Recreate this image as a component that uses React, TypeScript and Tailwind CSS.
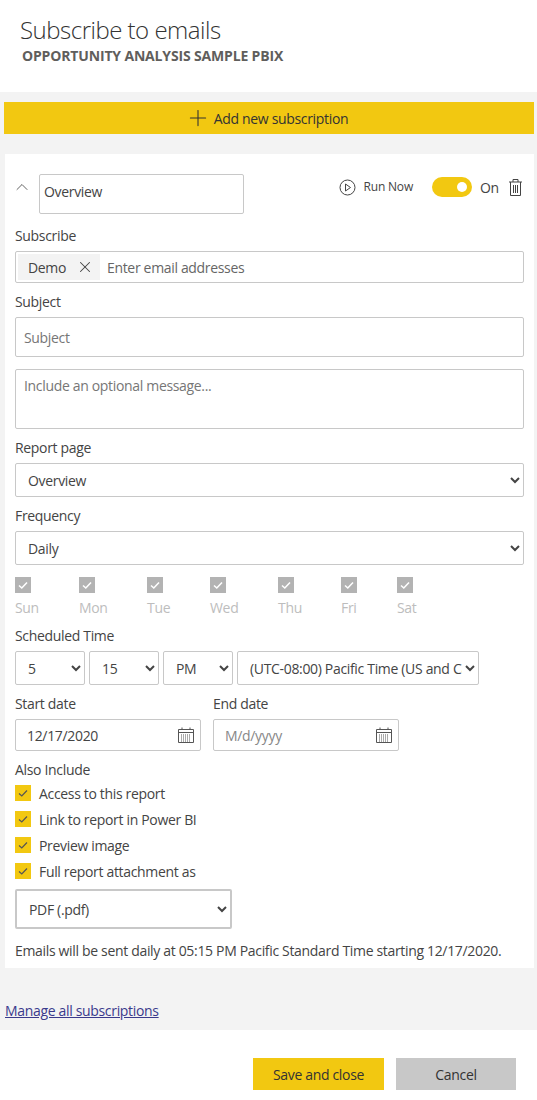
import React, { FC } from "react";
import { ChevronUp, Plus, X } from "lucide-react";

const fieldBorder = "border border-[#c8c8c8] rounded-[2px] bg-white";
const selectBase = `${fieldBorder} text-[14px] text-[#444] outline-none`;

const days = [
  { label: "Sun", width: "w-[64px]" },
  { label: "Mon", width: "w-[68px]" },
  { label: "Tue", width: "w-[63px]" },
  { label: "Wed", width: "w-[68px]" },
  { label: "Thu", width: "w-[63px]" },
  { label: "Fri", width: "w-[56px]" },
  { label: "Sat", width: "w-[50px]" },
];

const extras = ["Access to this report", "Link to report in Power BI", "Preview image", "Full report attachment as"];

const Check: FC<{ color: string; stroke: string; width: string }> = ({ color, stroke, width }) => (
  <span className={`flex h-4 w-4 shrink-0 items-center justify-center ${color}`}>
    <svg width="12" height="12" viewBox="0 0 12 12" fill="none" stroke={stroke} strokeWidth={width}>
      <path d="M2 6.5 L4.8 9 L10 3.5" />
    </svg>
  </span>
);

const Label: FC<{ children: React.ReactNode; className?: string }> = ({ children, className }) => (
  <div className={`h-5 text-[14px] leading-5 text-[#444] ${className ?? ""}`}>{children}</div>
);

const CalendarIcon = () => (
  <svg width="16" height="16" viewBox="0 0 16 16" fill="none" stroke="#555" strokeWidth="1">
    <path d="M0.5 2.5 H15.5 V15.5 H0.5 Z M0.5 5.5 H15.5 M4 0.5 V3 M12 0.5 V3" />
    <path d="M3 8 H13 M3 10 H13 M3 12 H13 M3 14 H13" strokeDasharray="1 1" />
  </svg>
);

const App: FC = () => {
  return (
    <div className="flex h-[1100px] w-[537px] flex-col bg-white font-['Open_Sans',sans-serif] text-[14px] tracking-[-0.33px] text-[#333]">
      <div className="h-[92px] shrink-0 pl-5 pt-[13px]">
        <h1 className="h-[33px] text-[24px] font-light leading-[33px] tracking-[-0.5px] text-[#333]">Subscribe to emails</h1>
        <h2 className="pl-0.5 text-[14px] font-bold leading-[19px] tracking-[-0.16px] text-[#605e5c]">
          OPPORTUNITY ANALYSIS SAMPLE PBIX
        </h2>
      </div>

      <div className="flex h-[938px] shrink-0 flex-col bg-[#f3f3f3] pl-1 pr-[3px] pt-2.5">
        <button className="flex h-8 w-full items-center justify-center gap-[3px] bg-[#f2c811] pr-[5px] text-[14px] text-[#333]">
          <Plus size={26} strokeWidth={1} />
          Add new subscription
        </button>

        <div className="ml-px mt-5 flex h-[814px] flex-col bg-white pl-2.5 pr-[10px] pt-5">
          <div className="flex h-10 items-start justify-between">
            <div className="flex items-start">
              <ChevronUp size={20} strokeWidth={1} className="-ml-[3px] mr-[7px] mt-[3px] text-[#444]" />
              <input
                defaultValue="Overview"
                className="h-10 w-[205px] rounded-[2px] border border-[#c8c8c8] pb-1.5 pl-1 text-[14px] text-[#444] outline-none"
              />
            </div>
            <div className="flex h-[26px] items-center text-[#444]">
              <svg width="17" height="17" viewBox="0 0 17 17" fill="none" stroke="#444" strokeWidth="1">
                <circle cx="8.5" cy="8.5" r="7.5" />
                <path d="M6.5 5 L11.5 8.5 L6.5 12 Z" />
              </svg>
              <span className="ml-2 text-[12px] tracking-[-0.2px]">Run Now</span>
              <span className="ml-[19px] flex h-5 w-10 items-center justify-end rounded-full bg-[#f2c811] pr-[5px]">
                <span className="h-2.5 w-2.5 rounded-full bg-white" />
              </span>
              <span className="ml-2 w-[29px] text-[14px]">On</span>
              <svg width="13" height="17" viewBox="0 0 13 17" fill="none" stroke="#444" strokeWidth="1" className="mr-0.5">
                <path d="M0 3 H13 M4 3 V0.5 H9 V3 M1.5 3 V16.5 H11.5 V3 M4.5 6 V14 M6.5 6 V14 M8.5 6 V14" />
              </svg>
            </div>
          </div>

          <Label className="mt-[12px]">Subscribe</Label>
          <div className={`mt-[5px] flex h-8 items-center ${fieldBorder} pl-0.5`}>
            <span className="flex h-[26px] w-[82px] items-center justify-between bg-[#f3f3f3] pl-2.5 pr-1.5 text-[#444]">
              Demo
              <X size={18} strokeWidth={1.4} />
            </span>
            <input placeholder="Enter email addresses" className="ml-[7px] flex-1 text-[14px] outline-none placeholder:text-[#666]" />
          </div>

          <Label className="mt-[9px]">Subject</Label>
          <input placeholder="Subject" className={`mt-[5px] h-10 ${fieldBorder} pl-2 text-[14px] outline-none placeholder:text-[#767676]`} />

          <textarea
            placeholder="Include an optional message..."
            className={`mt-3 h-[60px] resize-none ${fieldBorder} px-2 pt-1.5 text-[14px] leading-5 outline-none placeholder:text-[#767676]`}
          />

          <Label className="mt-[9px]">Report page</Label>
          <select defaultValue="Overview" className={`mt-[5px] h-[34px] ${selectBase} pl-2`}>
            <option>Overview</option>
          </select>

          <Label className="mt-[9px]">Frequency</Label>
          <select defaultValue="Daily" className={`mt-[5px] h-[34px] ${selectBase} pl-2`}>
            <option>Daily</option>
          </select>

          <div className="mt-3 flex">
            {days.map((day) => (
              <div key={day.label} className={`flex flex-col ${day.width}`}>
                <Check color="bg-[#b3b3b3]" stroke="#fff" width="1.6" />
                <span className="mt-[5px] h-5 text-[14px] leading-5 text-[#bdbdbd]">{day.label}</span>
              </div>
            ))}
          </div>

          <Label className="mt-[8px]">Scheduled Time</Label>
          <div className="mt-[5px] flex gap-1">
            <select defaultValue="5" className={`h-[34px] w-[70px] ${selectBase} pl-2`}>
              <option>5</option>
            </select>
            <select defaultValue="15" className={`h-[34px] w-[70px] ${selectBase} pl-2`}>
              <option>15</option>
            </select>
            <select defaultValue="PM" className={`h-[34px] w-[70px] ${selectBase} pl-2`}>
              <option>PM</option>
            </select>
            <select className={`h-[34px] w-[242px] ${selectBase} pl-2`}>
              <option>(UTC-08:00) Pacific Time (US and Canada)</option>
            </select>
          </div>

          <div className="mt-[9px] flex gap-3">
            <div className="w-[186px]">
              <Label>Start date</Label>
              <div className={`mt-[5px] flex h-8 items-center justify-between ${fieldBorder} pl-[11px] pr-[6px] text-[#444]`}>
                12/17/2020
                <CalendarIcon />
              </div>
            </div>
            <div className="w-[186px]">
              <Label>End date</Label>
              <div className={`mt-[5px] flex h-8 items-center justify-between ${fieldBorder} pl-[11px] pr-[6px] text-[#888]`}>
                M/d/yyyy
                <CalendarIcon />
              </div>
            </div>
          </div>

          <Label className="mt-[9px]">Also Include</Label>
          <div className="mt-[5px] flex flex-col gap-2.5">
            {extras.map((item) => (
              <div key={item} className="flex h-4 items-center gap-2">
                <Check color="bg-[#f2c811]" stroke="#555" width="1.2" />
                <span className="text-[14px] text-[#444]">{item}</span>
              </div>
            ))}
          </div>

          <select defaultValue="PDF (.pdf)" className="mt-[10px] h-10 w-[217px] rounded-[2px] border-2 border-[#c8c8c8] bg-white pl-2 text-[14px] text-[#444] outline-none">
            <option>PDF (.pdf)</option>
          </select>

          <p className="mt-3 text-[14px] leading-5 text-[#444]">
            Emails will be sent daily at 05:15 PM Pacific Standard Time starting 12/17/2020.
          </p>
        </div>

        <a href="#" className="ml-px mt-[33px] text-[14px] leading-5 text-[#3a3a8c] underline">
          Manage all subscriptions
        </a>
      </div>

      <div className="flex justify-end gap-3 pr-[21px] pt-7">
        <button className="h-8 w-[131px] bg-[#f2c811] text-[14px] text-[#333]">Save and close</button>
        <button className="h-8 w-[120px] bg-[#c8c8c8] text-[14px] text-[#333]">Cancel</button>
      </div>
    </div>
  );
};

export default App;
